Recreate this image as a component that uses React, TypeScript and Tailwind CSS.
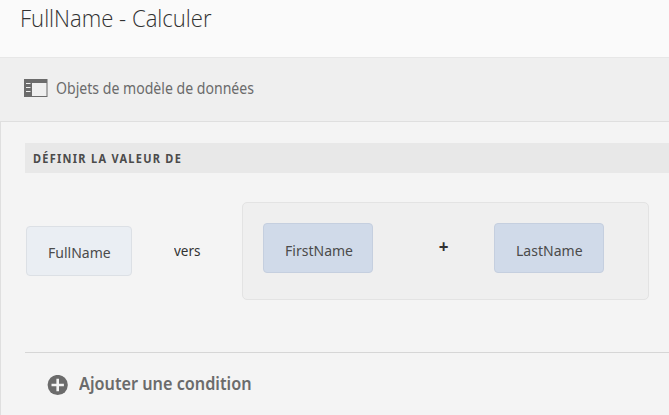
import React from "react";

function Field({ label, className }: { label: string; className: string }) {
  return (
    <div className={`flex h-[50px] items-center rounded-[4px] border pl-[21px] text-[15px] text-[#4b4b4b] ${className}`}>
      <span className="inline-block origin-left scale-x-[0.935] whitespace-nowrap">{label}</span>
    </div>
  );
}

function RailIcon() {
  return (
    <svg width="24" height="18" viewBox="0 0 24 18">
      <path fill="#6b6b6b" fillRule="evenodd" d="M0 0h23.5v18H0zM8 4v13h14.5V4z" />
      <path fill="#efefef" d="M2 4h4.5v1H2zM2 8h4.5v1H2zM2 12h4.5v1H2z" />
    </svg>
  );
}

function AddIcon() {
  return (
    <svg width="21" height="21" viewBox="0 0 21 21">
      <circle cx="10.7" cy="10" r="10.1" fill="#6b6b6b" />
      <path d="M10.7 3.8v12.4M4.5 10h12.4" stroke="#f4f4f4" strokeWidth="2.6" />
    </svg>
  );
}

export default function App() {
  return (
    <div className="flex h-[415px] w-[669px] flex-col overflow-hidden bg-[#efefef] font-['Noto_Sans','Open_Sans',sans-serif]">
      <header className="h-[58px] shrink-0 border-b border-[#e7e7e7] bg-[#fafafa] pl-[20px] pt-[2px]">
        <h1 className="inline-block origin-left scale-x-[0.96] whitespace-nowrap font-['Open_Sans','Noto_Sans',sans-serif] text-[23px] leading-8 font-light text-[#323232]">
          FullName - Calculer
        </h1>
      </header>
      <div className="flex h-[63px] shrink-0 items-center gap-[8px] pb-[3px] pl-[24px]">
        <RailIcon />
        <span className="inline-block origin-left scale-x-[0.88] whitespace-nowrap text-[16px] text-[#6b6b6b]">Objets de modèle de données</span>
      </div>
      <main className="flex grow flex-col border-l border-t border-[#dfdfdf] bg-[#f4f4f4] pl-[24px]">
        <h2 className="mt-[21px] flex h-[30px] items-center bg-[#e8e8e8] pl-[8px] pt-[2px] text-[12px] font-bold tracking-[1.4px] text-[#4b4b4b]">
          <span className="inline-block origin-left scale-x-[0.915] whitespace-nowrap">DÉFINIR LA VALEUR DE</span>
        </h2>
        <div className="mt-[29px] flex h-[98px]">
          <Field label="FullName" className="ml-[1px] mt-[24px] w-[106px] border-[#dce0e5] bg-[#eaeef3] pt-[2px]" />
          <div className="ml-[42px] mt-[37px] w-[68px] text-[15px] text-[#323232]">
            <span className="inline-block origin-left scale-x-90">vers</span>
          </div>
          <div className="flex w-[407px] rounded-[5px] border border-[#e3e3e3] bg-[#efefef] pl-[20px] pt-[20px]">
            <Field label="FirstName" className="w-[110px] border-[#c5cfdf] bg-[#d0dae9] pt-[4px]" />
            <div className="flex h-[48px] w-[121px] items-center justify-center pl-[20px] text-[17px] font-bold text-[#323232]">+</div>
            <Field label="LastName" className="w-[110px] border-[#c5cfdf] bg-[#d0dae9] pt-[4px]" />
          </div>
        </div>
        <div className="mt-[52px] flex border-t border-[#d6d6d6] pl-[22px] pt-[19px]">
          <div className="mt-[3px]"><AddIcon /></div>
          <span className="ml-[11px] inline-block origin-left scale-x-[0.955] whitespace-nowrap text-[17px] leading-6 font-semibold text-[#6b6b6b]">Ajouter une condition</span>
        </div>
      </main>
    </div>
  );
}
